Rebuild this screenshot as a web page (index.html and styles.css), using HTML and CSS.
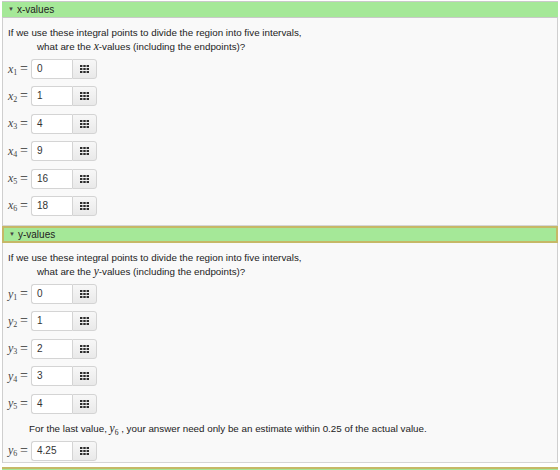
FILE: index.html
```html
<!DOCTYPE html>
<html>
<head>
<meta charset="utf-8">
<link rel="stylesheet" href="styles.css">
</head>
<body>
<div class="stack">
  <section class="part">
    <div class="part-head"><span class="caret">▼</span>x-values</div>
    <div class="part-body">
      <p class="prompt">If we use these integral points to divide the region into five intervals,<br>what are the <i class="mvar">x</i>-values (including the endpoints)?</p>
      <div class="answer"><span class="lbl"><i>x</i><sub>1</sub></span><span class="eq">=</span><span class="field">0</span><span class="pad"><svg viewBox="0 0 9 8" width="9" height="8"><g fill="#2b2b2b"><rect x="0" y="0" width="2.4" height="2"/><rect x="3.3" y="0" width="2.4" height="2"/><rect x="6.6" y="0" width="2.4" height="2"/><rect x="0" y="3" width="2.4" height="2"/><rect x="3.3" y="3" width="2.4" height="2"/><rect x="6.6" y="3" width="2.4" height="2"/><rect x="0" y="6" width="2.4" height="2"/><rect x="3.3" y="6" width="2.4" height="2"/><rect x="6.6" y="6" width="2.4" height="2"/></g></svg></span></div>
      <div class="answer"><span class="lbl"><i>x</i><sub>2</sub></span><span class="eq">=</span><span class="field">1</span><span class="pad"><svg viewBox="0 0 9 8" width="9" height="8"><g fill="#2b2b2b"><rect x="0" y="0" width="2.4" height="2"/><rect x="3.3" y="0" width="2.4" height="2"/><rect x="6.6" y="0" width="2.4" height="2"/><rect x="0" y="3" width="2.4" height="2"/><rect x="3.3" y="3" width="2.4" height="2"/><rect x="6.6" y="3" width="2.4" height="2"/><rect x="0" y="6" width="2.4" height="2"/><rect x="3.3" y="6" width="2.4" height="2"/><rect x="6.6" y="6" width="2.4" height="2"/></g></svg></span></div>
      <div class="answer"><span class="lbl"><i>x</i><sub>3</sub></span><span class="eq">=</span><span class="field">4</span><span class="pad"><svg viewBox="0 0 9 8" width="9" height="8"><g fill="#2b2b2b"><rect x="0" y="0" width="2.4" height="2"/><rect x="3.3" y="0" width="2.4" height="2"/><rect x="6.6" y="0" width="2.4" height="2"/><rect x="0" y="3" width="2.4" height="2"/><rect x="3.3" y="3" width="2.4" height="2"/><rect x="6.6" y="3" width="2.4" height="2"/><rect x="0" y="6" width="2.4" height="2"/><rect x="3.3" y="6" width="2.4" height="2"/><rect x="6.6" y="6" width="2.4" height="2"/></g></svg></span></div>
      <div class="answer"><span class="lbl"><i>x</i><sub>4</sub></span><span class="eq">=</span><span class="field">9</span><span class="pad"><svg viewBox="0 0 9 8" width="9" height="8"><g fill="#2b2b2b"><rect x="0" y="0" width="2.4" height="2"/><rect x="3.3" y="0" width="2.4" height="2"/><rect x="6.6" y="0" width="2.4" height="2"/><rect x="0" y="3" width="2.4" height="2"/><rect x="3.3" y="3" width="2.4" height="2"/><rect x="6.6" y="3" width="2.4" height="2"/><rect x="0" y="6" width="2.4" height="2"/><rect x="3.3" y="6" width="2.4" height="2"/><rect x="6.6" y="6" width="2.4" height="2"/></g></svg></span></div>
      <div class="answer"><span class="lbl"><i>x</i><sub>5</sub></span><span class="eq">=</span><span class="field">16</span><span class="pad"><svg viewBox="0 0 9 8" width="9" height="8"><g fill="#2b2b2b"><rect x="0" y="0" width="2.4" height="2"/><rect x="3.3" y="0" width="2.4" height="2"/><rect x="6.6" y="0" width="2.4" height="2"/><rect x="0" y="3" width="2.4" height="2"/><rect x="3.3" y="3" width="2.4" height="2"/><rect x="6.6" y="3" width="2.4" height="2"/><rect x="0" y="6" width="2.4" height="2"/><rect x="3.3" y="6" width="2.4" height="2"/><rect x="6.6" y="6" width="2.4" height="2"/></g></svg></span></div>
      <div class="answer"><span class="lbl"><i>x</i><sub>6</sub></span><span class="eq">=</span><span class="field">18</span><span class="pad"><svg viewBox="0 0 9 8" width="9" height="8"><g fill="#2b2b2b"><rect x="0" y="0" width="2.4" height="2"/><rect x="3.3" y="0" width="2.4" height="2"/><rect x="6.6" y="0" width="2.4" height="2"/><rect x="0" y="3" width="2.4" height="2"/><rect x="3.3" y="3" width="2.4" height="2"/><rect x="6.6" y="3" width="2.4" height="2"/><rect x="0" y="6" width="2.4" height="2"/><rect x="3.3" y="6" width="2.4" height="2"/><rect x="6.6" y="6" width="2.4" height="2"/></g></svg></span></div>
    </div>
  </section>
  <section class="part">
    <div class="part-head active"><span class="caret">▼</span>y-values</div>
    <div class="part-body">
      <p class="prompt">If we use these integral points to divide the region into five intervals,<br>what are the <i class="mvar">y</i>-values (including the endpoints)?</p>
      <div class="answer"><span class="lbl"><i>y</i><sub>1</sub></span><span class="eq">=</span><span class="field">0</span><span class="pad"><svg viewBox="0 0 9 8" width="9" height="8"><g fill="#2b2b2b"><rect x="0" y="0" width="2.4" height="2"/><rect x="3.3" y="0" width="2.4" height="2"/><rect x="6.6" y="0" width="2.4" height="2"/><rect x="0" y="3" width="2.4" height="2"/><rect x="3.3" y="3" width="2.4" height="2"/><rect x="6.6" y="3" width="2.4" height="2"/><rect x="0" y="6" width="2.4" height="2"/><rect x="3.3" y="6" width="2.4" height="2"/><rect x="6.6" y="6" width="2.4" height="2"/></g></svg></span></div>
      <div class="answer"><span class="lbl"><i>y</i><sub>2</sub></span><span class="eq">=</span><span class="field">1</span><span class="pad"><svg viewBox="0 0 9 8" width="9" height="8"><g fill="#2b2b2b"><rect x="0" y="0" width="2.4" height="2"/><rect x="3.3" y="0" width="2.4" height="2"/><rect x="6.6" y="0" width="2.4" height="2"/><rect x="0" y="3" width="2.4" height="2"/><rect x="3.3" y="3" width="2.4" height="2"/><rect x="6.6" y="3" width="2.4" height="2"/><rect x="0" y="6" width="2.4" height="2"/><rect x="3.3" y="6" width="2.4" height="2"/><rect x="6.6" y="6" width="2.4" height="2"/></g></svg></span></div>
      <div class="answer"><span class="lbl"><i>y</i><sub>3</sub></span><span class="eq">=</span><span class="field">2</span><span class="pad"><svg viewBox="0 0 9 8" width="9" height="8"><g fill="#2b2b2b"><rect x="0" y="0" width="2.4" height="2"/><rect x="3.3" y="0" width="2.4" height="2"/><rect x="6.6" y="0" width="2.4" height="2"/><rect x="0" y="3" width="2.4" height="2"/><rect x="3.3" y="3" width="2.4" height="2"/><rect x="6.6" y="3" width="2.4" height="2"/><rect x="0" y="6" width="2.4" height="2"/><rect x="3.3" y="6" width="2.4" height="2"/><rect x="6.6" y="6" width="2.4" height="2"/></g></svg></span></div>
      <div class="answer"><span class="lbl"><i>y</i><sub>4</sub></span><span class="eq">=</span><span class="field">3</span><span class="pad"><svg viewBox="0 0 9 8" width="9" height="8"><g fill="#2b2b2b"><rect x="0" y="0" width="2.4" height="2"/><rect x="3.3" y="0" width="2.4" height="2"/><rect x="6.6" y="0" width="2.4" height="2"/><rect x="0" y="3" width="2.4" height="2"/><rect x="3.3" y="3" width="2.4" height="2"/><rect x="6.6" y="3" width="2.4" height="2"/><rect x="0" y="6" width="2.4" height="2"/><rect x="3.3" y="6" width="2.4" height="2"/><rect x="6.6" y="6" width="2.4" height="2"/></g></svg></span></div>
      <div class="answer"><span class="lbl"><i>y</i><sub>5</sub></span><span class="eq">=</span><span class="field">4</span><span class="pad"><svg viewBox="0 0 9 8" width="9" height="8"><g fill="#2b2b2b"><rect x="0" y="0" width="2.4" height="2"/><rect x="3.3" y="0" width="2.4" height="2"/><rect x="6.6" y="0" width="2.4" height="2"/><rect x="0" y="3" width="2.4" height="2"/><rect x="3.3" y="3" width="2.4" height="2"/><rect x="6.6" y="3" width="2.4" height="2"/><rect x="0" y="6" width="2.4" height="2"/><rect x="3.3" y="6" width="2.4" height="2"/><rect x="6.6" y="6" width="2.4" height="2"/></g></svg></span></div>
      <p class="note">For the last value, <i class="mvar">y</i><sub class="msub">6</sub> , your answer need only be an estimate within 0.25 of the actual value.</p>
      <div class="answer"><span class="lbl"><i>y</i><sub>6</sub></span><span class="eq">=</span><span class="field">4.25</span><span class="pad"><svg viewBox="0 0 9 8" width="9" height="8"><g fill="#2b2b2b"><rect x="0" y="0" width="2.4" height="2"/><rect x="3.3" y="0" width="2.4" height="2"/><rect x="6.6" y="0" width="2.4" height="2"/><rect x="0" y="3" width="2.4" height="2"/><rect x="3.3" y="3" width="2.4" height="2"/><rect x="6.6" y="3" width="2.4" height="2"/><rect x="0" y="6" width="2.4" height="2"/><rect x="3.3" y="6" width="2.4" height="2"/><rect x="6.6" y="6" width="2.4" height="2"/></g></svg></span></div>
    </div>
  </section>
  <div class="next-edge"></div>
</div>
</body>
</html>
```

FILE: styles.css
```css
html, body {
  margin: 0;
  background: #fff;
}

body {
  font-family: "Liberation Sans", Arial, sans-serif;
  font-size: 9.8px;
  color: #222;
}

.stack {
  padding: 1px 2px 0 2px;
}

.part {
  border-left: 1px solid #cfcfcf;
  border-right: 1px solid #cfcfcf;
}

.part-head {
  box-sizing: border-box;
  height: 17px;
  line-height: 15px;
  background: #a5e898;
  border-top: 1px solid #c9c9c9;
  border-bottom: 1px solid #c9c9c9;
  margin: 0 -1px;
  padding-left: 6px;
  font-size: 10px;
  color: #222;
}

.part-head.active {
  border: 2px solid #c6b867;
  line-height: 13px;
  padding-left: 5px;
}

.caret {
  font-size: 6px;
  vertical-align: 2px;
  margin-right: 3px;
  color: #444;
}

.part-body {
  box-sizing: border-box;
  background: #f9f9f9;
  padding: 8px 0 7px 5px;
  border-bottom: 1px solid #d6d6d6;
}

.part:first-child .part-body {
  height: 208px;
}

.part:nth-child(2) .part-body {
  height: 220px;
  padding-bottom: 2px;
}

.prompt {
  margin: 0 0 5px 0;
  padding-left: 29px;
  text-indent: -29px;
  line-height: 14px;
  height: 28px;
}

.note {
  margin: 8.4px 0 5px 0;
  padding-left: 21px;
  line-height: 14px;
  height: 14px;
}

.mvar {
  font-family: "Liberation Serif", "Times New Roman", serif;
  font-size: 11.5px;
  line-height: 0;
}

.msub {
  font-family: "Liberation Serif", serif;
  font-size: 7.5px;
  line-height: 0;
}

.answer {
  display: flex;
  align-items: center;
  height: 20px;
  margin-bottom: 7.4px;
}

.answer:last-child,
.answer:has(+ .note) {
  margin-bottom: 0;
}

.lbl {
  font-family: "Liberation Serif", "Times New Roman", serif;
  font-size: 12px;
  color: #444;
  width: 10px;
  white-space: nowrap;
}

.lbl sub {
  font-size: 8px;
  vertical-align: -2px;
  line-height: 0;
}

.eq {
  font-family: "Liberation Serif", serif;
  font-size: 14px;
  color: #333;
  width: 13px;
  padding-left: 2px;
  box-sizing: border-box;
}

.field {
  box-sizing: border-box;
  width: 41px;
  height: 20px;
  line-height: 18px;
  background: #fff;
  border: 1px solid #d4d4d4;
  border-right: none;
  border-radius: 3px 0 0 3px;
  padding-left: 5px;
  color: #333;
  font-size: 10px;
}

.pad {
  box-sizing: border-box;
  width: 25px;
  height: 20px;
  display: flex;
  align-items: center;
  justify-content: center;
  background: linear-gradient(#f7f7f7, #e9e9e9);
  border: 1px solid #d4d4d4;
  border-radius: 0 3px 3px 0;
}

.next-edge {
  height: 3px;
  margin-top: 4px;
  border-top: 2px solid #c6b867;
  background: #a5e898;
}
```
